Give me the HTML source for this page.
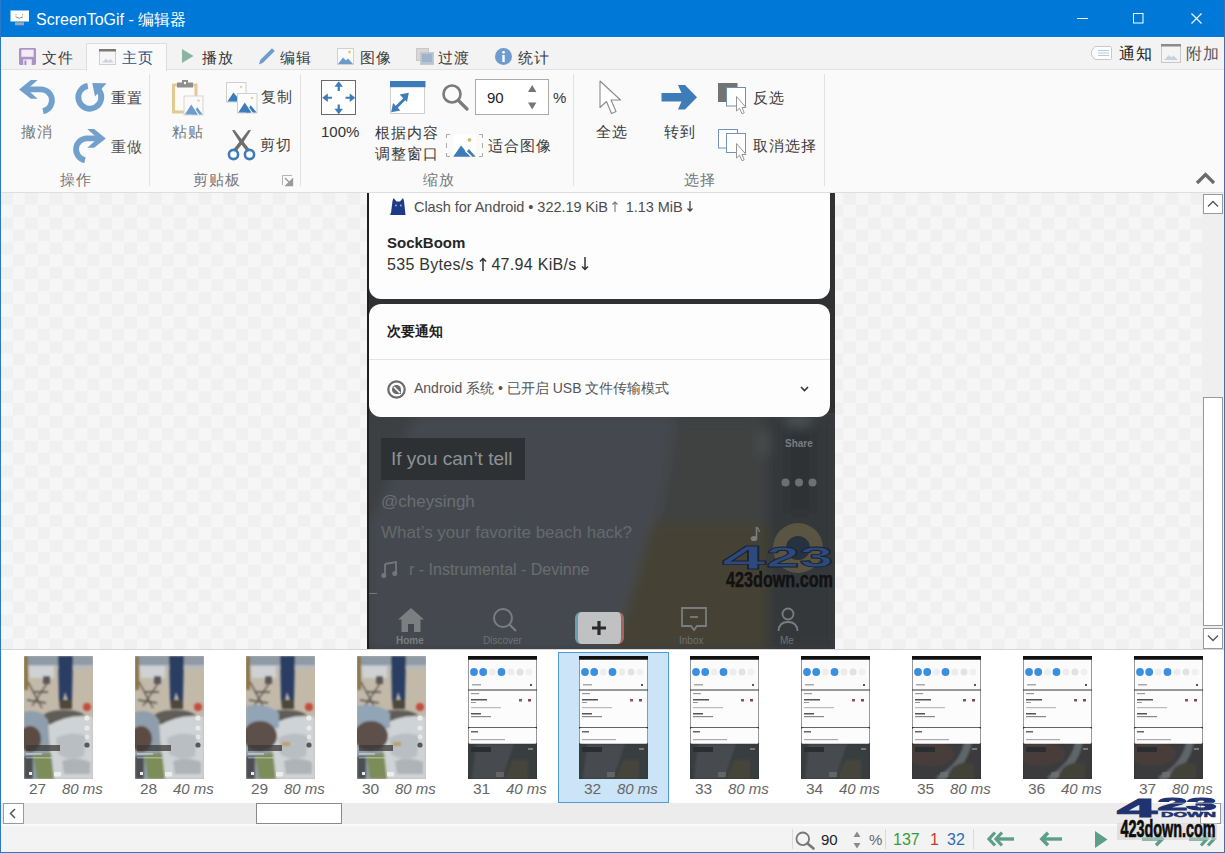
<!DOCTYPE html>
<html><head><meta charset="utf-8">
<style>
*{box-sizing:border-box}
html,body{margin:0;padding:0}
body{width:1225px;height:853px;position:relative;overflow:hidden;background:#f3f3f3;font-family:"Liberation Sans",sans-serif;font-size:15px;color:#333}
.a{position:absolute}
.t{position:absolute;white-space:nowrap;line-height:1}
svg{position:absolute;overflow:visible}
#title{left:0;top:0;width:1225px;height:37px;background:#0078d7}
#tabs{left:0;top:37px;width:1225px;height:33px;background:#f3f3f3;border-bottom:1px solid #e2e2e2}
#ribbon{left:0;top:70px;width:1225px;height:123px;background:#fafafa;border-bottom:1px solid #dedede}
#canvas{left:1px;top:193px;width:1202px;height:456px;background:conic-gradient(#f0f0f0 25%,#f6f6f6 0 50%,#f0f0f0 0 75%,#f6f6f6 0);background-size:24.8px 24.8px;background-position:23.9px 11.7px}
.sep{position:absolute;width:1px;background:#e2e2e2;top:74px;height:112px}
.lbl{color:#777}
.fl{color:#666;font-size:15.5px}
.fi{font-style:italic;font-size:15px}
</style></head><body>
<!-- title bar -->
<div id="title" class="a"></div>
<div id="tabs" class="a"></div>
<div id="ribbon" class="a"></div>
<div id="canvas" class="a"></div>

<!-- title content -->
<svg style="left:10px;top:10px" width="20" height="16" viewBox="0 0 20 16">
 <rect x="0.5" y="0.5" width="18.5" height="11" fill="#fff"/>
 <path d="M6 4.2v1M12.5 4.2v1M5.5 6.8q3.7 3 7.5 0" stroke="#8a8a8a" stroke-width="1" fill="none"/>
 <rect x="5" y="12.3" width="9" height="3" fill="#9aa8b8"/>
</svg>
<div class="t" style="left:36px;top:12px;font-size:16px;color:#fff">ScreenToGif - 编辑器</div>
<svg style="left:1077px;top:18px" width="11" height="1"><rect width="11" height="1" fill="#fff"/></svg>
<svg style="left:1133px;top:13px" width="11" height="11"><rect x="0.5" y="0.5" width="9.5" height="9.5" fill="none" stroke="#fff" stroke-width="1"/></svg>
<svg style="left:1191px;top:13px" width="11" height="11"><path d="M0.5 0.5L10.5 10.5M10.5 0.5L0.5 10.5" stroke="#fff" stroke-width="1.1"/></svg>

<!-- tabs -->
<div class="a" style="left:86px;top:43px;width:81px;height:28px;background:#fafafa;border:1px solid #dedede;border-bottom:none"></div>
<svg style="left:19px;top:48px" width="17" height="17" viewBox="0 0 18 18">
 <path d="M0 1.5Q0 0 1.5 0H16.5Q18 0 18 1.5V16.5Q18 18 16.5 18H1.5Q0 18 0 16.5Z" fill="#ad93c4"/>
 <rect x="2.5" y="1.8" width="13" height="7.5" fill="#f1ecf5"/>
 <rect x="4.5" y="12" width="9" height="6" fill="#f1ecf5"/>
 <rect x="5.8" y="13.2" width="2" height="4.8" fill="#a98ac0"/>
</svg>
<div class="t" style="left:42px;top:50px;color:#3a3a3a;letter-spacing:1px">文件</div>
<svg style="left:99px;top:49px" width="17" height="16" viewBox="0 0 17 16">
 <rect x="0.5" y="0.5" width="16" height="15" fill="#f6f6f6" stroke="#cfcfcf"/>
 <rect x="0" y="0" width="17" height="2.5" fill="#7a7a7a"/>
 <path d="M3 13.5L7 9.5L9.5 12L11.5 10L14.5 13.5Z" fill="#c9d4df"/>
</svg>
<div class="t" style="left:122px;top:50px;color:#2c4f88;letter-spacing:1px">主页</div>
<svg style="left:182px;top:49px" width="12" height="14"><path d="M0 0L11.5 7L0 14Z" fill="#8db4a2"/></svg>
<div class="t" style="left:202px;top:50px;color:#333;letter-spacing:1px">播放</div>
<svg style="left:257px;top:46px" width="20" height="20" viewBox="0 0 20 20">
 <path d="M2 18.5L3.2 14L15 2.2L17.8 5L6 16.8Z" fill="#6e9ccc"/>
</svg>
<div class="t" style="left:280px;top:50px;color:#3a3a3a;letter-spacing:1px">编辑</div>
<svg style="left:337px;top:48px" width="17" height="17" viewBox="0 0 17 17">
 <rect x="0.5" y="0.5" width="16" height="16" fill="#fafafa" stroke="#d0d0d0"/>
 <circle cx="12.5" cy="4" r="1.4" fill="#e6c97a"/>
 <path d="M1 16L6 9.5L9 12.5L11 10.5L16 16Z" fill="#6d9ac8"/>
</svg>
<div class="t" style="left:360px;top:50px;color:#3a3a3a;letter-spacing:1px">图像</div>
<svg style="left:416px;top:48px" width="18" height="17" viewBox="0 0 18 17">
 <rect x="0.5" y="0.5" width="12" height="12" fill="#d7d7d7" stroke="#c8c8c8"/>
 <rect x="4.5" y="4.5" width="13" height="12" fill="#b7c3d1" stroke="#c8c8c8"/>
 <rect x="6" y="6" width="10" height="8" fill="#9fb4cc"/>
</svg>
<div class="t" style="left:438px;top:50px;color:#3a3a3a;letter-spacing:1px">过渡</div>
<svg style="left:495px;top:48px" width="17" height="17" viewBox="0 0 17 17">
 <circle cx="8.5" cy="8.5" r="8.5" fill="#6f9ccc"/>
 <rect x="7.3" y="7" width="2.4" height="7" fill="#fff"/>
 <circle cx="8.5" cy="4.3" r="1.4" fill="#fff"/>
</svg>
<div class="t" style="left:518px;top:50px;color:#3a3a3a;letter-spacing:1px">统计</div>
<svg style="left:1091px;top:46px" width="21" height="14" viewBox="0 0 21 14">
 <path d="M4 0.5H19.5Q20.5 0.5 20.5 1.5V12.5Q20.5 13.5 19.5 13.5H4L0.5 9V5Z" fill="#fdfdfd" stroke="#c8c8c8"/>
 <path d="M7 4.5H18M7 7H18M7 9.5H18" stroke="#b9c9dc" stroke-width="1"/>
</svg>
<div class="t" style="left:1119px;top:46px;color:#222;font-size:16px;letter-spacing:1px">通知</div>
<svg style="left:1161px;top:44px" width="20" height="19" viewBox="0 0 20 19">
 <rect x="0.5" y="0.5" width="19" height="18" fill="#f4f4f4" stroke="#c9c9c9"/>
 <rect x="0" y="0" width="20" height="2.5" fill="#8c8c8c"/>
 <path d="M3 16L8 11L10.5 13.5L12.5 11.5L17 16Z" fill="#c5d2df"/>
</svg>
<div class="t" style="left:1186px;top:46px;color:#555;font-size:16px;letter-spacing:1px">附加</div>


<!-- ribbon -->
<div class="sep" style="left:149px"></div>
<div class="sep" style="left:300px"></div>
<div class="sep" style="left:573px"></div>
<div class="sep" style="left:824px"></div>
<!-- undo -->
<svg style="left:15px;top:76px" width="95" height="90" viewBox="0 0 95 90">
 <g fill="#72a0cd">
  <path d="M4.1 13.4L15.8 4.1H22.6L14.5 11.2V15.6L22.6 22.8H15.8Z"/>
  <path d="M90.8 62.4L79.1 53.1H72.3L80.4 60.2V64.6L72.3 71.8H79.1Z"/>
  <path d="M77.3 7L91.5 7.2L80 20.5Z"/>
 </g>
 <g fill="none" stroke="#72a0cd" stroke-width="5.8">
  <path d="M13 13.4H25.8A11 11 0 0 1 28 35.2"/>
  <path d="M82 62.4H72.2A11 11 0 0 0 70 84.2"/>
  <path d="M72.80 9.87A11.5 11.5 0 1 0 83.86 14.12"/>
 </g>
</svg>
<div class="t lbl" style="left:21px;top:124px;color:#7a7a7a;letter-spacing:1px">撤消</div>
<!-- reset -->
<div class="t" style="left:111px;top:90px;color:#444;letter-spacing:1px">重置</div>
<!-- redo -->
<div class="t" style="left:111px;top:139px;color:#555;letter-spacing:1px">重做</div>
<div class="t lbl" style="left:60px;top:172px;letter-spacing:1px">操作</div>

<!-- paste -->
<svg style="left:172px;top:80px" width="32" height="36" viewBox="0 0 32 36">
 <rect x="1.5" y="5" width="22.5" height="27" fill="#fdfbf7" stroke="#e3c996" stroke-width="3"/>
 <rect x="5" y="2.5" width="16" height="5" fill="#8e8e8e"/>
 <rect x="10" y="0" width="6" height="4" fill="#8e8e8e"/>
 <circle cx="13" cy="3" r="1.2" fill="#fff"/>
 <rect x="12" y="16" width="19" height="19" fill="#fafafa" stroke="#d5d5d5"/>
 <circle cx="26.5" cy="20.5" r="1.3" fill="#e9d39a"/>
 <path d="M20.5 34.5L25.2 27.3L30.6 34.5Z" fill="#6e9ccc"/><path d="M19.6 25L26.6 35" stroke="#fafafa" stroke-width="1.4"/><path d="M12.8 34.5L19.3 24.5L25.8 34.5Z" fill="#6e9ccc"/>
</svg>
<div class="t lbl" style="left:172px;top:124px;letter-spacing:1px">粘贴</div>
<!-- copy -->
<svg style="left:226px;top:82px" width="32" height="32" viewBox="0 0 32 32">
 <rect x="0.5" y="0.5" width="19.5" height="19.5" fill="#fcfcfc" stroke="#d0d0d0"/>
 <circle cx="15" cy="5" r="1.2" fill="#e9d39a"/>
 <path d="M1.3 19.5L7.5 10.5L12 16L19 19.5Z" fill="#3e7bb9"/>
 <rect x="11.5" y="11.5" width="19.5" height="19.5" fill="#fcfcfc" stroke="#d0d0d0"/>
 <circle cx="26" cy="16" r="1.3" fill="#e9d39a"/>
 <path d="M20 30.5L24.7 23.3L30.6 30.5Z" fill="#3e7bb9"/><path d="M19.1 21L26.1 31" stroke="#fcfcfc" stroke-width="1.4"/><path d="M12.3 30.5L18.8 20.5L25.3 30.5Z" fill="#3e7bb9"/>
</svg>
<div class="t" style="left:261px;top:89px;color:#444;letter-spacing:1px">复制</div>
<!-- cut -->
<svg style="left:227px;top:130px" width="30" height="31" viewBox="0 0 30 31">
 <path d="M5 0.3L7.6 0L16 11L22.8 19.8L19.8 21.6L12.8 12.6Z" fill="#6e6e6e"/><path d="M24 0.3L21.4 0L13 11L6.2 19.8L9.2 21.6L16.2 12.6Z" fill="#6e6e6e"/>
 <circle cx="6.5" cy="24.5" r="4.6" fill="#fff" stroke="#3e7bb9" stroke-width="2.6"/>
 <circle cx="22.5" cy="24.5" r="4.6" fill="#fff" stroke="#3e7bb9" stroke-width="2.6"/>
</svg>
<div class="t" style="left:260px;top:137px;color:#444;letter-spacing:1px">剪切</div>
<div class="t lbl" style="left:193px;top:172px;letter-spacing:1px">剪贴板</div>
<svg style="left:282px;top:175px" width="11" height="11" viewBox="0 0 11 11">
 <path d="M0.5 10V0.5H10" fill="none" stroke="#b5b5b5"/>
 <path d="M3 3L9.5 9.5M10.5 4V10.5H4Z" stroke="#9a9a9a" fill="#9a9a9a" stroke-width="1.3"/>
</svg>

<!-- 100% -->
<svg style="left:321px;top:80px" width="36" height="36" viewBox="0 0 36 36">
 <rect x="0.5" y="0.5" width="34" height="34" fill="#fff" stroke="#6a6a6a"/>
 <g fill="#3e7bb9">
  <path d="M17.75 1.2L22 6.8H13.5Z"/><path d="M17.75 34.3L22 28.7H13.5Z"/>
  <path d="M1.2 17.75L6.8 13.5V22Z"/><path d="M34.3 17.75L28.7 13.5V22Z"/>
 </g>
 <g stroke="#3e7bb9" stroke-width="2.2">
  <path d="M17.75 5V11M17.75 24.5V30.5M5 17.75H11M24.5 17.75H30.5"/>
 </g>
</svg>
<div class="t" style="left:321px;top:124px;color:#333">100%</div>
<!-- fit window -->
<svg style="left:390px;top:81px" width="36" height="34" viewBox="0 0 36 34">
 <rect x="0.5" y="0.5" width="34" height="32" fill="#fff" stroke="#d0d0d0"/>
 <rect x="0" y="0" width="35.5" height="6.2" fill="#3e7bb9"/>
 <path d="M4 28.5L16 16.5" stroke="#3e7bb9" stroke-width="2.8"/>
 <path d="M18.8 11.8L17 21L9.6 13.6Z" fill="#3e7bb9"/>
 <path d="M1.2 31.3L3 22.1L10.4 29.5Z" fill="#3e7bb9"/>
</svg>
<div class="t" style="left:375px;top:125px;color:#3a3a3a;letter-spacing:1px">根据内容</div>
<div class="t" style="left:375px;top:146px;color:#3a3a3a;letter-spacing:1px">调整窗口</div>
<!-- magnifier -->
<svg style="left:441px;top:83px" width="30" height="30" viewBox="0 0 30 30">
 <circle cx="11" cy="11" r="8.5" fill="none" stroke="#7a7a7a" stroke-width="2.6"/>
 <path d="M17.5 17.5L26 26" stroke="#7a7a7a" stroke-width="3.2" stroke-linecap="round"/>
</svg>
<div class="a" style="left:475px;top:79px;width:74px;height:36px;background:#fff;border:1px solid #ababab"></div>
<div class="t" style="left:487px;top:90px;color:#222">90</div>
<svg style="left:528px;top:85px" width="9" height="26"><path d="M0 7L4.2 0L8.4 7ZM0 17.5H8.4L4.2 24.5Z" fill="#767676"/></svg>
<div class="t" style="left:553px;top:90px;color:#333">%</div>
<!-- fit image -->
<svg style="left:446px;top:134px" width="38" height="24" viewBox="0 0 38 24">
 <path d="M0.5 4V0.5H4M33 0.5H36.5V4M36.5 19V22.5H33M4 22.5H0.5V19M0.5 9V14M36.5 9V14" fill="none" stroke="#aaaaaa"/>
 <rect x="7" y="0" width="23" height="23" fill="#fff"/>
 <circle cx="23.5" cy="5.8" r="1.9" fill="#d6b56b"/>
 <path d="M7.2 22.8L15 11.5L20.5 18L22.8 15L29.8 22.8Z" fill="#3e7bb9"/>
 <path d="M19.2 16.5L25.5 22.8" stroke="#fff" stroke-width="1.4"/>
</svg>
<div class="t" style="left:488px;top:138px;color:#3a3a3a;letter-spacing:1px">适合图像</div>
<div class="t lbl" style="left:423px;top:172px;letter-spacing:1px">缩放</div>

<!-- select all -->
<svg style="left:599px;top:80px" width="25" height="36" viewBox="0 0 25 36">
 <path d="M1 1V27.5L7.5 21.5L12.5 33.5L17 31.5L12 20H21.5Z" fill="#fff" stroke="#8a8a8a" stroke-width="1.1" stroke-linejoin="round"/>
</svg>
<div class="t" style="left:596px;top:124px;color:#3a3a3a;letter-spacing:1px">全选</div>
<!-- go to -->
<svg style="left:661px;top:84px" width="37" height="27" viewBox="0 0 37 27">
 <path d="M0.5 9H20.5L17 1H24L36 13.25L24 25.5H17L20.5 17.5H0.5Z" fill="#3e7bb9"/>
</svg>
<div class="t" style="left:664px;top:124px;color:#3a3a3a;letter-spacing:1px">转到</div>
<!-- invert selection -->
<svg style="left:718px;top:83px" width="32" height="32" viewBox="0 0 32 32">
 <rect x="0" y="0" width="19.5" height="19" fill="#737373"/>
 <rect x="8.5" y="4.5" width="19" height="18.5" fill="#fff" stroke="#6e8fb5"/>
 <path d="M18.5 13.5V28L21.5 25.3L24 30.7L26.2 29.8L24 24.5H28Z" fill="#fff" stroke="#8a8a8a" stroke-width="0.9" stroke-linejoin="round"/>
</svg>
<div class="t" style="left:753px;top:90px;color:#3a3a3a;letter-spacing:1px">反选</div>
<!-- deselect -->
<svg style="left:718px;top:129px" width="32" height="33" viewBox="0 0 32 33">
 <rect x="0.5" y="0.5" width="19" height="18.5" fill="#fff" stroke="#7393ba"/>
 <rect x="8.5" y="4.5" width="19" height="19" fill="#fff" stroke="#7393ba"/>
 <path d="M18.5 14.5V29L21.5 26.3L24 31.7L26.2 30.8L24 25.5H28Z" fill="#fff" stroke="#8a8a8a" stroke-width="0.9" stroke-linejoin="round"/>
</svg>
<div class="t" style="left:753px;top:138px;color:#3a3a3a;letter-spacing:1px">取消选择</div>
<div class="t lbl" style="left:684px;top:172px;letter-spacing:1px">选择</div>
<!-- collapse caret -->
<svg style="left:1195px;top:172px" width="21" height="13" viewBox="0 0 21 13"><path d="M2 11L10.5 2.5L19 11" fill="none" stroke="#6b6b6b" stroke-width="3.2"/></svg>


<!-- phone image -->
<div class="a" style="left:367px;top:193px;width:468px;height:456px;background:#2f3133;overflow:hidden">
 <svg style="left:0;top:0" width="468" height="456" viewBox="0 0 468 456">
  <defs>
   <filter id="bl" x="-20%" y="-20%" width="140%" height="140%"><feGaussianBlur stdDeviation="6"/></filter>
  </defs>
  <rect x="0" y="220" width="468" height="236" fill="#3a3d40"/>
  <g filter="url(#bl)">
   <path d="M50 222H308Q300 300 280 360Q262 410 246 456H0V300Q30 260 50 222Z" fill="#454a4f"/>
   <path d="M308 222Q300 300 280 360Q262 410 246 456H400L405 330Q400 250 390 222Z" fill="#414343"/>
   <path d="M285 330Q262 410 246 456H405L405 330Z" fill="#444335"/>
   <path d="M400 222H468V456H400Z" fill="#36393b"/>
   <path d="M0 222H45Q25 300 0 330Z" fill="#3c3f42"/>
   <path d="M420 236Q432 224 446 236V320H420Z" fill="#2d3134"/>
   <ellipse cx="432" cy="228" rx="14" ry="6" fill="#505457"/>
   <rect x="392" y="236" width="10" height="28" fill="#4a4d50"/>
  </g>
 </svg>
 <!-- card 1 -->
 <div class="a" style="left:2px;top:-20px;width:461px;height:126px;background:#fdfdfd;border-radius:12px"></div>
 <svg style="left:21px;top:5px" width="19" height="18" viewBox="0 0 19 18">
  <path d="M4 17Q2 17 1.5 15.5Q2.5 16 3 15L4.5 3L5.5 0L8.5 3.5H12L15 0L16 3L17.5 17Z" fill="#1d3a86"/>
  <circle cx="8" cy="7.5" r="0.9" fill="#9fb3e0"/><circle cx="12.8" cy="7.5" r="0.9" fill="#9fb3e0"/>
 </svg>
 <div class="t" style="left:47px;top:7px;font-size:14.5px;color:#4d4d4d;letter-spacing:-0.05px">Clash for Android &bull; 322.19 KiB <svg style="position:relative;display:inline-block;vertical-align:baseline" width="6" height="11" viewBox="0 0 6 11"><path d="M3 11V1M0.5 3.5L3 1L5.5 3.5" stroke="#777" stroke-width="1.1" fill="none"/></svg>&nbsp; 1.13 MiB <svg style="position:relative;display:inline-block;vertical-align:baseline" width="6" height="11" viewBox="0 0 6 11"><path d="M3 0V10M0.5 7.5L3 10L5.5 7.5" stroke="#444" stroke-width="1.3" fill="none"/></svg></div>
 <div class="t" style="left:20px;top:42px;font-size:15px;font-weight:bold;color:#262626">SockBoom</div>
 <div class="t" style="left:20px;top:64px;font-size:16px;color:#333;letter-spacing:0.3px">535 Bytes/s <svg style="position:relative;display:inline-block;vertical-align:-1px" width="8" height="14" viewBox="0 0 8 14"><path d="M4 14V1.5M1 4.5L4 1.5L7 4.5" stroke="#333" stroke-width="1.5" fill="none"/></svg> 47.94 KiB/s <svg style="position:relative;display:inline-block;vertical-align:-1px" width="8" height="14" viewBox="0 0 8 14"><path d="M4 0V12.5M1 9.5L4 12.5L7 9.5" stroke="#333" stroke-width="1.5" fill="none"/></svg></div>
 <!-- card 2 -->
 <div class="a" style="left:2px;top:111px;width:461px;height:113px;background:#fdfdfd;border-radius:12px"></div>
 <div class="a" style="left:2px;top:166px;width:461px;height:1px;background:#e3e3e3"></div>
 <div class="t" style="left:20px;top:131px;font-size:14px;color:#1e1e1e;font-weight:bold;-webkit-text-stroke:0px">次要通知</div>
 <svg style="left:20px;top:187px" width="20" height="20" viewBox="0 0 20 20">
  <circle cx="9.5" cy="9.5" r="8.2" fill="none" stroke="#6a6a6a" stroke-width="2.2"/>
  <path d="M5 9.5A4.5 4.5 0 0 1 14 9.5V14H9.5A4.5 4.5 0 0 1 5 9.5Z" fill="#6a6a6a"/>
  <path d="M7 7L13 13" stroke="#fdfdfd" stroke-width="1.6"/>
 </svg>
 <div class="t" style="left:47px;top:188px;font-size:14px;color:#555">Android 系统 &bull; 已开启 USB 文件传输模式</div>
 <svg style="left:433px;top:193px" width="9" height="6"><path d="M1 1L4.5 4.5L8 1" stroke="#333" stroke-width="1.6" fill="none"/></svg>
 <!-- tiktok overlay -->
 <div class="a" style="left:14px;top:245px;width:144px;height:42px;background:#2e3133"></div>
 <div class="t" style="left:24px;top:256px;font-size:19px;color:#8e9194">If you can&#8217;t tell</div>
 <div class="t" style="left:14px;top:300px;font-size:17px;color:#6b6e71">@cheysingh</div>
 <div class="t" style="left:14px;top:331px;font-size:17px;color:#66696c">What&#8217;s your favorite beach hack?</div>
 <svg style="left:14px;top:368px" width="17" height="17" viewBox="0 0 17 17"><path d="M4 3L15 1V13M4 3V15" stroke="#74777a" stroke-width="1.8" fill="none"/><circle cx="2.8" cy="14.5" r="2.5" fill="#74777a"/><circle cx="13.8" cy="12.5" r="2.5" fill="#74777a"/></svg>
 <div class="t" style="left:42px;top:369px;font-size:16px;color:#6a6d70">r - Instrumental - Devinne</div>
 <div class="a" style="left:0;top:400px;width:10px;height:1px;background:#777"></div>
 <div class="t" style="left:418px;top:246px;font-size:10px;font-weight:bold;color:#7a7d80">Share</div>
 <svg style="left:414px;top:285px" width="38" height="10"><circle cx="4.5" cy="4.5" r="4" fill="#6d7073"/><circle cx="18" cy="4.5" r="4" fill="#6d7073"/><circle cx="31.5" cy="4.5" r="4" fill="#6d7073"/></svg>
 <svg style="left:383px;top:333px" width="10" height="16" viewBox="0 0 10 16"><path d="M6.5 1V12" stroke="#7a7d80" stroke-width="1.6"/><path d="M6.5 1Q9 3 9.5 6" stroke="#7a7d80" stroke-width="1.4" fill="none"/><ellipse cx="4" cy="12.5" rx="3.3" ry="2.6" fill="#7a7d80"/></svg>
 <!-- watermark in image -->
 <svg style="left:350px;top:325px" width="118" height="72" viewBox="0 0 118 72">
  <circle cx="81" cy="30" r="25" fill="#5a5443"/>
  <circle cx="81" cy="30" r="12" fill="#283140"/>
  <text x="5" y="51" font-family="Liberation Sans" font-weight="bold" font-size="34" fill="#2d4a7c" stroke="#1a2233" stroke-width="0.8" textLength="44" lengthAdjust="spacingAndGlyphs">4</text>
  <text x="49" y="49" font-family="Liberation Sans" font-weight="bold" font-size="30" fill="#2d4a7c" stroke="#1a2233" stroke-width="0.8" textLength="67" lengthAdjust="spacingAndGlyphs">23</text>
  <text x="9" y="69" font-family="Liberation Sans" font-weight="bold" font-size="22" fill="#121212" stroke="#121212" stroke-width="0.5" textLength="107" lengthAdjust="spacingAndGlyphs">423down.com</text>
 </svg>
 <!-- nav bar -->
 <svg style="left:30px;top:414px" width="28" height="26" viewBox="0 0 28 26"><path d="M14 1L27 12.5H23.5V25H17V17H11V25H4.5V12.5H1Z" fill="#7c7f82"/></svg>
 <div class="t" style="left:29px;top:443px;font-size:10px;font-weight:bold;color:#7a7d80">Home</div>
 <svg style="left:125px;top:414px" width="26" height="26" viewBox="0 0 26 26"><circle cx="11" cy="11" r="9" fill="none" stroke="#7a7d80" stroke-width="2"/><path d="M17.5 17.5L24 24" stroke="#7a7d80" stroke-width="2.2"/></svg>
 <div class="t" style="left:116px;top:443px;font-size:10px;color:#6e7173">Discover</div>
 <div class="a" style="left:208px;top:419px;width:49px;height:32px;border-radius:6px;background:#bfc1c2;border-left:3px solid #6aa0ad;border-right:3px solid #a86262"></div>
 <svg style="left:224px;top:427px" width="16" height="16"><path d="M8 1V15M1 8H15" stroke="#2a2a2a" stroke-width="3.2"/></svg>
 <svg style="left:314px;top:414px" width="26" height="27" viewBox="0 0 26 27"><path d="M1 1H25V19H16L13 23L10 19H1Z" fill="none" stroke="#7a7d80" stroke-width="1.8"/><path d="M9 10H17" stroke="#7a7d80" stroke-width="1.8"/></svg>
 <div class="t" style="left:312px;top:443px;font-size:10px;color:#6e7173">Inbox</div>
 <svg style="left:410px;top:414px" width="22" height="26" viewBox="0 0 22 26"><circle cx="11" cy="7" r="5.5" fill="none" stroke="#7a7d80" stroke-width="1.8"/><path d="M1.5 24Q2 15 11 15Q20 15 20.5 24" fill="none" stroke="#7a7d80" stroke-width="1.8"/></svg>
 <div class="t" style="left:413px;top:443px;font-size:10px;color:#6e7173">Me</div>
 <div class="a" style="left:0;top:0;width:2px;height:456px;background:#1e1f20"></div>
</div>



<!-- v scrollbar -->
<div class="a" style="left:1202px;top:193px;width:22px;height:456px;background:#efefef"></div>
<div class="a" style="left:1203px;top:194px;width:20px;height:20px;background:#fff;border:1px solid #9a9a9a"></div>
<svg style="left:1207px;top:200px" width="12" height="8"><path d="M1 6.5L6 1.5L11 6.5" stroke="#555" stroke-width="1.4" fill="none"/></svg>
<div class="a" style="left:1203px;top:397px;width:20px;height:229px;background:#fff;border:1px solid #9a9a9a"></div>
<div class="a" style="left:1203px;top:628px;width:20px;height:21px;background:#fff;border:1px solid #9a9a9a"></div>
<svg style="left:1207px;top:634px" width="12" height="8"><path d="M1 1.5L6 6.5L11 1.5" stroke="#555" stroke-width="1.4" fill="none"/></svg>

<!-- frame strip -->
<div class="a" style="left:1px;top:649px;width:1223px;height:1px;background:#d6d6d6"></div>
<div class="a" style="left:1px;top:650px;width:1223px;height:153px;background:#fff"></div>
<div class="a" style="left:558px;top:652px;width:111px;height:151px;background:#cce4f7;border:1px solid #4f9ad8"></div>
<svg width="0" height="0" style="position:absolute">
 <defs>
  <filter id="tb" x="-5%" y="-5%" width="110%" height="110%"><feGaussianBlur stdDeviation="1"/></filter>
  <clipPath id="tc"><rect width="69" height="123"/></clipPath>
  <symbol id="thA" viewBox="0 0 69 123">
   <g clip-path="url(#tc)">
   <rect width="69" height="123" fill="#c2b9a9"/>
   <g filter="url(#tb)">
    <rect x="0" y="0" width="69" height="10" fill="#8e9aa5"/>
    <rect x="0" y="9" width="69" height="4" fill="#b5b9bb"/>
    <path d="M5 10H30V22H6Z" fill="#cfd2d4"/>
    <rect x="0" y="0" width="4" height="34" fill="#8b7547"/>
    <path d="M4 26L18 52M24 26L8 50M10 36H24M3 44L22 47" stroke="#514d48" stroke-width="1.3"/>
    <rect x="19" y="20" width="7" height="8" fill="#5a5856"/>
    <path d="M34 0H49L48 44H44L41 36L39 44H35Z" fill="#2c3e63"/>
    <path d="M35 44H48V53H36Z" fill="#4d463d"/>
    <ellipse cx="40" cy="62" rx="22" ry="8" fill="#5f5d57"/>
    <circle cx="63" cy="51" r="4" fill="#c44b3d"/>
    <path d="M24 70Q45 57 69 61V123H30Z" fill="#cfd3d6"/>
    <path d="M32 82Q48 74 62 80L60 100Q46 106 34 98Z" fill="#b9bec2"/>
    <path d="M38 105Q50 100 66 106V118H40Z" fill="#aeb3b7"/>
    <path d="M0 56Q16 52 24 64L27 123H0Z" fill="#8f9eac"/>
    <ellipse cx="6" cy="83" rx="11" ry="13" fill="#5b4b42"/>
    <path d="M9 99L27 97L30 123H13Z" fill="#7d8d5a"/>
    <rect x="0" y="100" width="9" height="23" fill="#4b4f52"/>
   </g>
   <rect x="2" y="89" width="34" height="6" fill="#3b3836" opacity="0.75"/>
   <rect x="2" y="97" width="16" height="1.8" fill="#e0e0e0" opacity="0.55"/>
   <rect x="2" y="101" width="26" height="1.5" fill="#e0e0e0" opacity="0.45"/>
   <circle cx="63" cy="62" r="2.6" fill="#f2f2f2" opacity="0.85"/>
   <circle cx="63" cy="72" r="2.6" fill="#f2f2f2" opacity="0.75"/>
   <circle cx="63" cy="81" r="2.4" fill="#f2f2f2" opacity="0.65"/>
   <circle cx="63" cy="89" r="2.6" fill="#3a3a3a" opacity="0.8"/>
   <rect x="30" y="116" width="7" height="4.5" fill="#eee" rx="1"/>
   <rect x="5" y="116" width="3" height="3" fill="#eee"/>
   </g>
  </symbol>
  <symbol id="thC" viewBox="0 0 69 123">
   <g clip-path="url(#tc)">
   <rect width="69" height="123" fill="#c2b9a9"/>
   <g filter="url(#tb)">
    <rect x="0" y="0" width="69" height="10" fill="#8e9aa5"/>
    <rect x="0" y="9" width="69" height="4" fill="#b5b9bb"/>
    <path d="M5 10H30V22H6Z" fill="#cfd2d4"/>
    <rect x="0" y="0" width="4" height="34" fill="#8b7547"/>
    <path d="M4 26L18 52M24 26L8 50M10 36H24M3 44L22 47" stroke="#514d48" stroke-width="1.3"/>
    <rect x="19" y="20" width="7" height="8" fill="#5a5856"/>
    <path d="M34 0H49L48 44H44L41 36L39 44H35Z" fill="#2c3e63"/>
    <path d="M35 44H48V53H36Z" fill="#4d463d"/>
    <ellipse cx="40" cy="62" rx="22" ry="8" fill="#5f5d57"/>
    <circle cx="63" cy="51" r="4" fill="#c44b3d"/>
    <path d="M24 70Q45 57 69 61V123H30Z" fill="#cfd3d6"/>
    <path d="M32 82Q48 74 62 80L60 100Q46 106 34 98Z" fill="#b9bec2"/>
    <path d="M38 105Q50 100 66 106V118H40Z" fill="#aeb3b7"/>
    <path d="M0 56Q16 52 24 64L27 123H0Z" fill="#8f9eac"/>
    <path d="M0 50Q20 46 33 57V72H0Z" fill="#91a5b6"/><ellipse cx="14" cy="80" rx="17" ry="15" fill="#5d5048"/><rect x="36" y="86" width="8" height="4" fill="#b8a060"/>
    <path d="M9 99L27 97L30 123H13Z" fill="#7d8d5a"/>
    <rect x="0" y="100" width="9" height="23" fill="#4b4f52"/>
   </g>
   <rect x="2" y="89" width="34" height="6" fill="#3b3836" opacity="0.75"/>
   <rect x="2" y="97" width="16" height="1.8" fill="#e0e0e0" opacity="0.55"/>
   <rect x="2" y="101" width="26" height="1.5" fill="#e0e0e0" opacity="0.45"/>
   <circle cx="63" cy="62" r="2.6" fill="#f2f2f2" opacity="0.85"/>
   <circle cx="63" cy="72" r="2.6" fill="#f2f2f2" opacity="0.75"/>
   <circle cx="63" cy="81" r="2.4" fill="#f2f2f2" opacity="0.65"/>
   <circle cx="63" cy="89" r="2.6" fill="#3a3a3a" opacity="0.8"/>
   <rect x="30" y="116" width="7" height="4.5" fill="#eee" rx="1"/>
   <rect x="5" y="116" width="3" height="3" fill="#eee"/>
   </g>
  </symbol>
  <symbol id="thB" viewBox="0 0 69 123">
   <rect width="69" height="123" fill="#313436"/>
   <g filter="url(#tb)" clip-path="url(#tc)">
    <path d="M0 88H69V123H0Z" fill="#393c3f"/>
    <path d="M8 88H46Q40 105 34 123H4Z" fill="#474b50"/>
    <path d="M44 104Q40 114 36 123H60V104Z" fill="#45453a"/>
   </g>
   <rect x="0" y="0" width="69" height="3.5" fill="#111"/>
   <rect x="0.5" y="3.8" width="68" height="29.7" fill="#fbfbfb"/>
   <circle cx="6" cy="16" r="3.9" fill="#3b8fe0"/>
   <circle cx="15.2" cy="16" r="3.9" fill="#3b8fe0"/>
   <circle cx="24.4" cy="16" r="3.5" fill="#eeeeee"/>
   <circle cx="33.5" cy="16" r="3.9" fill="#3b8fe0"/>
   <circle cx="43" cy="16" r="3.5" fill="#ececec"/>
   <circle cx="52" cy="16" r="3.5" fill="#e2e2e2"/>
   <circle cx="61" cy="16" r="3.5" fill="#f0f0f0"/>
   <rect x="4" y="28" width="9" height="1.5" fill="#aaa"/>
   <rect x="62" y="28" width="2" height="2" fill="#555"/>
   <rect x="0.5" y="34.5" width="68" height="36.5" fill="#fcfcfc"/>
   <rect x="3" y="37" width="8" height="1.2" fill="#999"/>
   <rect x="3" y="43" width="16" height="1.5" fill="#555"/>
   <rect x="3" y="46" width="5" height="1" fill="#999"/>
   <rect x="51" y="43" width="3" height="2.5" fill="#8a5555"/>
   <rect x="60" y="43" width="3" height="2.5" fill="#8a4444"/>
   <rect x="3" y="51" width="30" height="1.2" fill="#bbb"/>
   <rect x="3" y="57" width="10" height="1.5" fill="#555"/>
   <rect x="3" y="60" width="20" height="1.2" fill="#888"/>
   <rect x="0.5" y="71.8" width="68" height="16" fill="#fcfcfc" rx="1.5"/>
   <rect x="3" y="75" width="7" height="1.5" fill="#666"/>
   <rect x="3" y="83" width="34" height="1.2" fill="#aaa"/>
   <rect x="3" y="91" width="20" height="5" fill="#2b2e30"/>
   <rect x="60" y="92" width="5" height="2" fill="#777"/>
   <rect x="28" y="116" width="8" height="5" fill="#777" opacity="0.6"/>
  </symbol>
  <symbol id="thD" viewBox="0 0 69 123">
   <rect width="69" height="123" fill="#313436"/>
   <g filter="url(#tb)" clip-path="url(#tc)">
    <path d="M0 88H69V123H0Z" fill="#3a3b3d"/>
    <ellipse cx="18" cy="98" rx="24" ry="12" fill="#4a3d3b"/>
    <path d="M56 86Q52 110 26 124" stroke="#5f666b" stroke-width="7.5" fill="none"/>
    <path d="M40 112Q50 104 62 108V123H34Z" fill="#434338"/>
   </g>
   <rect x="0" y="0" width="69" height="3.5" fill="#111"/>
   <rect x="0.5" y="3.8" width="68" height="29.7" fill="#fbfbfb"/>
   <circle cx="6" cy="16" r="3.9" fill="#3b8fe0"/>
   <circle cx="15.2" cy="16" r="3.9" fill="#3b8fe0"/>
   <circle cx="24.4" cy="16" r="3.5" fill="#eeeeee"/>
   <circle cx="33.5" cy="16" r="3.9" fill="#3b8fe0"/>
   <circle cx="43" cy="16" r="3.5" fill="#ececec"/>
   <circle cx="52" cy="16" r="3.5" fill="#e2e2e2"/>
   <circle cx="61" cy="16" r="3.5" fill="#f0f0f0"/>
   <rect x="4" y="28" width="9" height="1.5" fill="#aaa"/>
   <rect x="62" y="28" width="2" height="2" fill="#555"/>
   <rect x="0.5" y="34.5" width="68" height="36.5" fill="#fcfcfc"/>
   <rect x="3" y="37" width="8" height="1.2" fill="#999"/>
   <rect x="3" y="43" width="16" height="1.5" fill="#555"/>
   <rect x="3" y="46" width="5" height="1" fill="#999"/>
   <rect x="51" y="43" width="3" height="2.5" fill="#8a5555"/>
   <rect x="60" y="43" width="3" height="2.5" fill="#8a4444"/>
   <rect x="3" y="51" width="30" height="1.2" fill="#bbb"/>
   <rect x="3" y="57" width="10" height="1.5" fill="#555"/>
   <rect x="3" y="60" width="20" height="1.2" fill="#888"/>
   <rect x="0.5" y="71.8" width="68" height="16" fill="#fcfcfc" rx="1.5"/>
   <rect x="3" y="75" width="7" height="1.5" fill="#666"/>
   <rect x="3" y="83" width="34" height="1.2" fill="#aaa"/>
   <rect x="3" y="91" width="20" height="5" fill="#2b2e30"/>
   <rect x="60" y="92" width="5" height="2" fill="#777"/>
   <rect x="28" y="116" width="8" height="5" fill="#777" opacity="0.6"/>
  </symbol>
 </defs>
</svg>
<svg style="left:24px;top:656px" width="69" height="123"><use href="#thA"/></svg>
<div class="t fl" style="left:29px;top:781px">27</div><div class="t fl fi" style="left:62px;top:781px">80 ms</div>
<svg style="left:135px;top:656px" width="69" height="123"><use href="#thA"/></svg>
<div class="t fl" style="left:140px;top:781px">28</div><div class="t fl fi" style="left:173px;top:781px">40 ms</div>
<svg style="left:246px;top:656px" width="69" height="123"><use href="#thC"/></svg>
<div class="t fl" style="left:251px;top:781px">29</div><div class="t fl fi" style="left:284px;top:781px">80 ms</div>
<svg style="left:357px;top:656px" width="69" height="123"><use href="#thC"/></svg>
<div class="t fl" style="left:362px;top:781px">30</div><div class="t fl fi" style="left:395px;top:781px">80 ms</div>
<svg style="left:468px;top:656px" width="69" height="123"><use href="#thB"/></svg>
<div class="t fl" style="left:473px;top:781px">31</div><div class="t fl fi" style="left:506px;top:781px">40 ms</div>
<svg style="left:579px;top:656px" width="69" height="123"><use href="#thB"/></svg>
<div class="t fl" style="left:584px;top:781px">32</div><div class="t fl fi" style="left:617px;top:781px">80 ms</div>
<svg style="left:690px;top:656px" width="69" height="123"><use href="#thB"/></svg>
<div class="t fl" style="left:695px;top:781px">33</div><div class="t fl fi" style="left:728px;top:781px">80 ms</div>
<svg style="left:801px;top:656px" width="69" height="123"><use href="#thB"/></svg>
<div class="t fl" style="left:806px;top:781px">34</div><div class="t fl fi" style="left:839px;top:781px">40 ms</div>
<svg style="left:912px;top:656px" width="69" height="123"><use href="#thD"/></svg>
<div class="t fl" style="left:917px;top:781px">35</div><div class="t fl fi" style="left:950px;top:781px">80 ms</div>
<svg style="left:1023px;top:656px" width="69" height="123"><use href="#thD"/></svg>
<div class="t fl" style="left:1028px;top:781px">36</div><div class="t fl fi" style="left:1061px;top:781px">40 ms</div>
<svg style="left:1134px;top:656px" width="69" height="123"><use href="#thD"/></svg>
<div class="t fl" style="left:1139px;top:781px">37</div><div class="t fl fi" style="left:1172px;top:781px">80 ms</div>

<!-- h scrollbar -->
<div class="a" style="left:1px;top:803px;width:1223px;height:21px;background:#ececec"></div>
<div class="a" style="left:3px;top:803px;width:21px;height:21px;background:#fff;border:1px solid #9a9a9a"></div>
<svg style="left:9px;top:808px" width="8" height="11"><path d="M6 1L1.5 5.5L6 10" stroke="#555" stroke-width="1.5" fill="none"/></svg>
<div class="a" style="left:256px;top:803px;width:86px;height:21px;background:#fff;border:1px solid #8a8a8a"></div>
<div class="a" style="left:1200px;top:803px;width:21px;height:21px;background:#fff;border:1px solid #9a9a9a"></div>
<!-- status bar -->
<div class="a" style="left:1px;top:824px;width:1223px;height:2px;background:#fafafa"></div>
<div class="a" style="left:1px;top:826px;width:1223px;height:26px;background:#f3f3f3"></div>
<div class="a" style="left:792px;top:829px;width:1px;height:20px;background:#dadada"></div>
<svg style="left:795px;top:831px" width="21" height="19" viewBox="0 0 21 19"><circle cx="7.8" cy="7.8" r="6.3" fill="none" stroke="#777" stroke-width="1.8"/><path d="M12.5 12.5L18.5 17.5" stroke="#777" stroke-width="2.6" stroke-linecap="round"/></svg>
<div class="t" style="left:821px;top:832px;color:#222">90</div>
<svg style="left:853px;top:831px" width="9" height="19"><path d="M0.5 6L4 0.5L7.5 6ZM0.5 12H7.5L4 17.5Z" fill="#8a8a8a"/></svg>
<div class="t" style="left:869px;top:832px;color:#666">%</div>
<div class="a" style="left:885px;top:829px;width:1px;height:20px;background:#dadada"></div>
<div class="t" style="left:893px;top:832px;color:#3a9a3a;font-size:16px">137</div>
<div class="t" style="left:930px;top:832px;color:#c23b32;font-size:16px">1</div>
<div class="t" style="left:947px;top:832px;color:#2f6cb8;font-size:16px">32</div>
<div class="a" style="left:973px;top:829px;width:1px;height:20px;background:#dadada"></div>
<svg style="left:988px;top:832px" width="27" height="14" viewBox="0 0 27 14"><path d="M7 0.5L1 7L7 13.5M14 0.5L8 7L14 13.5" stroke="#5c9e88" stroke-width="3.2" fill="none"/><path d="M9 7H26" stroke="#5c9e88" stroke-width="3.4"/></svg>
<svg style="left:1040px;top:832px" width="23" height="14" viewBox="0 0 23 14"><path d="M8 0.8L1.8 7L8 13.2" stroke="#5c9e88" stroke-width="3.4" fill="none"/><path d="M2 7H22" stroke="#5c9e88" stroke-width="3.4"/></svg>
<svg style="left:1095px;top:831px" width="13" height="17"><path d="M0 0L12.5 8.5L0 17Z" fill="#5c9e88"/></svg>
<svg style="left:1141px;top:832px" width="23" height="14" viewBox="0 0 23 14"><path d="M15 0.8L21.2 7L15 13.2" stroke="#5c9e88" stroke-width="3.4" fill="none"/><path d="M1 7H21" stroke="#5c9e88" stroke-width="3.4"/></svg>
<svg style="left:1188px;top:832px" width="27" height="14" viewBox="0 0 27 14"><path d="M20 0.5L26 7L20 13.5M13 0.5L19 7L13 13.5" stroke="#5c9e88" stroke-width="3.2" fill="none"/><path d="M1 7H18" stroke="#5c9e88" stroke-width="3.4"/></svg>
<!-- 423down watermark -->
<svg style="left:1100px;top:790px" width="125" height="60" viewBox="0 0 125 60">
 <rect x="17" y="33" width="100" height="17" fill="#d0d0d0" opacity="0.55"/>
 <text x="17" y="26.5" font-family="Liberation Sans" font-weight="bold" font-size="26.5" fill="#1f3370" stroke="#1f3370" stroke-width="1" textLength="40" lengthAdjust="spacingAndGlyphs">4</text>
 <text x="58" y="19.5" font-family="Liberation Sans" font-weight="bold" font-size="16.5" fill="#1f3370" stroke="#1f3370" stroke-width="1.2" textLength="58" lengthAdjust="spacingAndGlyphs">23</text>
 <path d="M62 13.2H115" stroke="#fff" stroke-width="1" opacity="0.5"/>
 <text x="61" y="27" font-family="Liberation Sans" font-weight="bold" font-size="8" fill="#1f3370" stroke="#1f3370" stroke-width="0.5" textLength="55" lengthAdjust="spacingAndGlyphs">DOWN</text>
 <text x="20.5" y="46.5" font-family="Liberation Sans" font-weight="bold" font-size="23" fill="#0d0d0d" stroke="#0d0d0d" stroke-width="0.7" textLength="95" lengthAdjust="spacingAndGlyphs">423down.com</text>
</svg>

<!-- window border -->
<div class="a" style="left:0;top:0;width:1px;height:853px;background:#2a78c8"></div>
<div class="a" style="left:1224px;top:0;width:1px;height:853px;background:#2a78c8"></div>
<div class="a" style="left:0;top:852px;width:1225px;height:1px;background:#2a78c8"></div>
</body></html>
